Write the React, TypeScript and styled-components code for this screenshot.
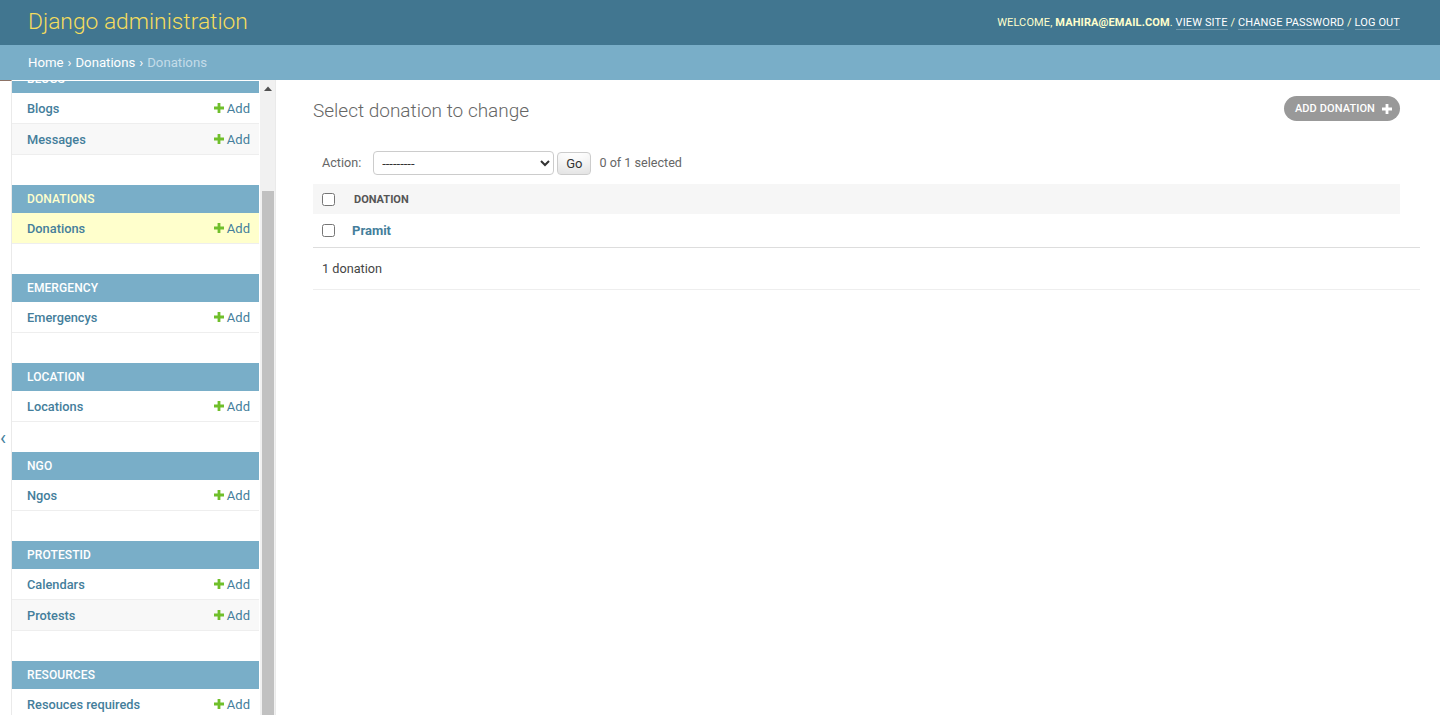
import React, { useLayoutEffect, useRef } from "react";
import styled, { createGlobalStyle } from "styled-components";

const GlobalStyle = createGlobalStyle`
  html, body { margin: 0; padding: 0; height: 100%; }
  body {
    font-family: Roboto, "Liberation Sans", Arial, sans-serif;
    color: #333;
    background: #fff;
    font-size: 14px;
    overflow: hidden;
  }
  #root { height: 100%; }
  * { box-sizing: border-box; }
`;

const Page = styled.div`
  display: flex;
  flex-direction: column;
  height: 100vh;
  overflow: hidden;
`;

const Header = styled.header`
  flex: 0 0 45px;
  display: flex;
  align-items: center;
  justify-content: space-between;
  padding: 0 40px 0 28px;
  background: #417690;
  color: #ffc;
`;

const Branding = styled.h1`
  margin: 0;
  font-size: 22.8px;
  font-weight: 300;
  line-height: 1;
  color: #f5dd5d;
`;

const UserTools = styled.div`
  font-size: 11px;
  letter-spacing: 0.12px;
  text-transform: uppercase;
  font-weight: 400;
  color: #ffc;
`;

const UserName = styled.strong`
  font-weight: 700;
`;

const ToolLink = styled.a`
  color: #fff;
  text-decoration: none;
  border-bottom: 1px solid rgba(255, 255, 255, 0.25);
`;

const Breadcrumbs = styled.nav`
  flex: 0 0 35px;
  display: flex;
  align-items: center;
  padding: 0 28px;
  background: #79aec8;
  color: #c4dce8;
  font-size: 13.2px;
`;

const Crumb = styled.a`
  color: #fff;
  text-decoration: none;
`;

const Sep = styled.span`
  color: #fff;
  margin: 0 4px;
`;

const Main = styled.div`
  flex: 1;
  display: flex;
  min-height: 0;
  overflow: hidden;
`;

const Sidebar = styled.aside`
  flex: 0 0 276px;
  display: flex;
  height: 100vh;
  border-right: 1px solid #eaeaea;
`;

const Toggle = styled.button`
  flex: 0 0 12px;
  display: flex;
  align-items: center;
  justify-content: flex-start;
  padding: 0;
  margin: 0;
  border: 0;
  border-top: 1px solid #8d7366;
  border-right: 1px solid #eaeaea;
  background: #fff;
  color: #447e9b;
  font-family: Roboto, sans-serif;
  font-size: 20px;
  line-height: 1;
  overflow: hidden;
`;

const NavScroll = styled.div`
  position: relative;
  flex: 0 0 248px;
  overflow: hidden;
  border-top: 1px solid #fff;
  padding-right: 1px;
`;

const NavModule = styled.section`
  margin-bottom: 30px;
`;

const Caption = styled.div<{ $current?: boolean }>`
  height: 28px;
  line-height: 28px;
  padding: 0 15px;
  background: #79aec8;
  color: ${(p) => (p.$current ? "#ffc" : "#fff")};
  font-size: 12px;
  font-weight: 500;
  letter-spacing: 0.1px;
  text-transform: uppercase;
  white-space: nowrap;
  overflow: hidden;
`;

const ModelRow = styled.div<{ $bg: string }>`
  height: 31px;
  display: flex;
  align-items: center;
  justify-content: space-between;
  padding: 0 9px 0 15px;
  border-bottom: 1px solid #eee;
  background: ${(p) => p.$bg};
`;

const ModelLink = styled.a`
  color: #447e9b;
  font-size: 12.8px;
  font-weight: 500;
  text-decoration: none;
`;

const AddLink = styled.a`
  display: flex;
  align-items: center;
  gap: 3px;
  color: #447e9b;
  font-size: 13px;
  text-decoration: none;
`;

const ScrollTrack = styled.div`
  flex: 0 0 15px;
  display: flex;
  flex-direction: column;
  align-items: center;
  background: #f1f1f1;
`;

const ScrollArrow = styled.div`
  flex: 0 0 17px;
  display: flex;
  align-items: center;
  justify-content: center;
`;

const ScrollThumb = styled.div`
  flex: 1;
  width: 12px;
  margin-top: 94px;
  background: #c1c1c1;
`;

const Content = styled.main`
  flex: 1;
  min-width: 0;
  padding: 16px 40px 0 37px;
`;

const HeadingRow = styled.div`
  display: flex;
  justify-content: space-between;
  align-items: flex-start;
`;

const Title = styled.h1`
  margin: 3px 0 0;
  font-size: 19px;
  line-height: 24px;
  font-weight: 300;
  color: #666;
`;

const AddButton = styled.a`
  display: inline-flex;
  align-items: center;
  gap: 7px;
  height: 25px;
  padding: 0 8px 0 11px;
  border-radius: 15px;
  background: #999;
  color: #fff;
  font-size: 11px;
  font-weight: 500;
  letter-spacing: 0.1px;
  text-transform: uppercase;
  text-decoration: none;
`;

const Actions = styled.div`
  display: flex;
  align-items: center;
  margin-top: 20px;
  padding: 8px 9px 9px;
  line-height: 24px;
  font-size: 12.6px;
`;

const ActionLabel = styled.label`
  color: #666;
  margin-right: 12px;
`;

const ActionSelect = styled.select`
  width: 181px;
  height: 24px;
  border: 1px solid #ccc;
  border-radius: 4px;
  background: #fff;
  color: #333;
  font-family: Roboto, sans-serif;
  font-size: 13px;
  padding: 0 4px;
`;

const GoButton = styled.button`
  height: 23px;
  margin-left: 3px;
  padding: 0 8px;
  border: 1px solid #ccc;
  border-radius: 4px;
  background: #fff;
  box-shadow: 0 -15px 20px -10px rgba(0, 0, 0, 0.15) inset;
  color: #333;
  font-family: Roboto, sans-serif;
  font-size: 13px;
  line-height: 1;
`;

const Counter = styled.span`
  margin-left: 8px;
  color: #666;
`;

const Results = styled.table`
  width: 100%;
  border-collapse: collapse;
`;

const HeadCell = styled.th<{ $check?: boolean }>`
  height: 30px;
  padding: 0 0 0 ${(p) => (p.$check ? "9px" : "10px")};
  width: ${(p) => (p.$check ? "31px" : "auto")};
  background: #f6f6f6;
  text-align: left;
  vertical-align: middle;
  font-size: 11px;
  font-weight: 700;
  color: #555;
  text-transform: uppercase;
`;

const Cell = styled.td<{ $check?: boolean }>`
  height: 33px;
  padding: 0 0 0 ${(p) => (p.$check ? "9px" : "8px")};
  vertical-align: middle;
  font-size: 13px;
`;

const Check = styled.input`
  display: block;
  width: 13px;
  height: 13px;
  margin: 0;
`;

const RowLink = styled.a`
  color: #447e9b;
  font-weight: 700;
  text-decoration: none;
`;

const Paginator = styled.p`
  margin: 0 -20px 0 0;
  padding: 10px 9px 9px;
  line-height: 22px;
  font-size: 12.7px;
  color: #444;
  border-top: 1px solid #ddd;
  border-bottom: 1px solid #eee;
`;

const PlusIcon = ({ color, size }: { color: string; size: number }) => (
  <svg width={size} height={size} viewBox="0 0 10 10" aria-hidden="true">
    <path d="M3.6 0h2.8v3.6H10v2.8H6.4V10H3.6V6.4H0V3.6h3.6z" fill={color} />
  </svg>
);

type Model = { name: string; current?: boolean };
type AppModule = { app: string; models: Model[] };

const modules: AppModule[] = [
  { app: "Blogs", models: [{ name: "Blogs" }, { name: "Messages" }] },
  { app: "Donations", models: [{ name: "Donations", current: true }] },
  { app: "Emergency", models: [{ name: "Emergencys" }] },
  { app: "Location", models: [{ name: "Locations" }] },
  { app: "Ngo", models: [{ name: "Ngos" }] },
  { app: "Protestid", models: [{ name: "Calendars" }, { name: "Protests" }] },
  { app: "Resources", models: [{ name: "Resouces requireds" }] },
  { app: "Users", models: [{ name: "Users" }] },
];

export default function App() {
  const navRef = useRef<HTMLDivElement>(null);

  useLayoutEffect(() => {
    if (navRef.current) {
      navRef.current.scrollTop = 16;
    }
  }, []);

  return (
    <>
      <GlobalStyle />
      <Page>
        <Header>
          <Branding>Django administration</Branding>
          <UserTools>
            Welcome, <UserName>mahira@email.com</UserName>.{" "}
            <ToolLink href="#">View site</ToolLink> /{" "}
            <ToolLink href="#">Change password</ToolLink> /{" "}
            <ToolLink href="#">Log out</ToolLink>
          </UserTools>
        </Header>
        <Breadcrumbs>
          <Crumb href="#">Home</Crumb>
          <Sep>›</Sep>
          <Crumb href="#">Donations</Crumb>
          <Sep>›</Sep>
          Donations
        </Breadcrumbs>
        <Main>
          <Sidebar>
            <Toggle aria-label="Toggle navigation">‹</Toggle>
            <NavScroll ref={navRef}>
              {modules.map((m) => {
                const isCurrent = m.models.some((x) => x.current);
                return (
                  <NavModule key={m.app}>
                    <Caption $current={isCurrent}>{m.app}</Caption>
                    {m.models.map((model, i) => (
                      <ModelRow
                        key={model.name}
                        $bg={model.current ? "#ffc" : i % 2 === 1 ? "#f8f8f8" : "#fff"}
                      >
                        <ModelLink href="#">{model.name}</ModelLink>
                        <AddLink href="#">
                          <PlusIcon color="#70bf2b" size={10} />
                          Add
                        </AddLink>
                      </ModelRow>
                    ))}
                  </NavModule>
                );
              })}
            </NavScroll>
            <ScrollTrack>
              <ScrollArrow>
                <svg width="8" height="5" viewBox="0 0 8 5" aria-hidden="true">
                  <path d="M0 5L4 0.5L8 5z" fill="#505050" />
                </svg>
              </ScrollArrow>
              <ScrollThumb />
            </ScrollTrack>
          </Sidebar>
          <Content>
            <HeadingRow>
              <Title>Select donation to change</Title>
              <AddButton href="#">
                Add donation
                <PlusIcon color="#fff" size={10} />
              </AddButton>
            </HeadingRow>
            <Actions>
              <ActionLabel>Action:</ActionLabel>
              <ActionSelect defaultValue="">
                <option value="">---------</option>
                <option value="delete">Delete selected donations</option>
              </ActionSelect>
              <GoButton>Go</GoButton>
              <Counter>0 of 1 selected</Counter>
            </Actions>
            <Results>
              <thead>
                <tr>
                  <HeadCell $check>
                    <Check type="checkbox" />
                  </HeadCell>
                  <HeadCell>Donation</HeadCell>
                </tr>
              </thead>
              <tbody>
                <tr>
                  <Cell $check>
                    <Check type="checkbox" />
                  </Cell>
                  <Cell>
                    <RowLink href="#">Pramit</RowLink>
                  </Cell>
                </tr>
              </tbody>
            </Results>
            <Paginator>1 donation</Paginator>
          </Content>
        </Main>
      </Page>
    </>
  );
}
